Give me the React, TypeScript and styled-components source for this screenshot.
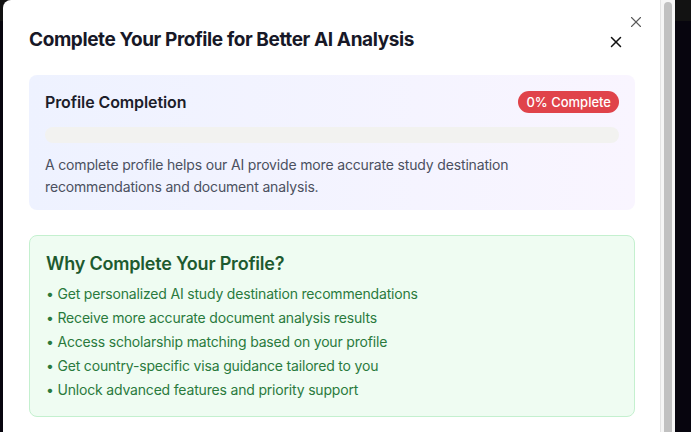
import React from 'react'
import styled, { createGlobalStyle } from 'styled-components'
import { X } from 'lucide-react'

const GlobalStyle = createGlobalStyle`
  html, body {
    margin: 0;
    height: 100%;
    overflow: hidden;
  }
  body {
    font-family: Inter, 'Noto Sans', sans-serif;
    background: linear-gradient(to bottom, #121212 0, #121212 21px, #07050e 21px);
  }
`

const benefits = [
  'Get personalized AI study destination recommendations',
  'Receive more accurate document analysis results',
  'Access scholarship matching based on your profile',
  'Get country-specific visa guidance tailored to you',
  'Unlock advanced features and priority support'
]

const App: React.FC = () => {
  const completion = 0
  return (
    <>
      <GlobalStyle />
      <Backdrop>
        <Dialog>
          <DialogBody>
            <DismissButton aria-label='Dismiss'>
              <X size={18} strokeWidth={1.5} />
            </DismissButton>
            <Header>
              <Title>Complete Your Profile for Better AI Analysis</Title>
              <CloseButton aria-label='Close'>
                <X size={18} strokeWidth={2} />
              </CloseButton>
            </Header>

            <ProgressCard>
              <CardRow>
                <CardTitle>Profile Completion</CardTitle>
                <Badge>{completion}% Complete</Badge>
              </CardRow>
              <Track>
                <Fill style={{ width: `${completion}%` }} />
              </Track>
              <Hint>
                A complete profile helps our AI provide more accurate study destination
                recommendations and document analysis.
              </Hint>
            </ProgressCard>

            <BenefitCard>
              <BenefitTitle>Why Complete Your Profile?</BenefitTitle>
              <BenefitList>
                {benefits.map((b) => (
                  <li key={b}>• {b}</li>
                ))}
              </BenefitList>
            </BenefitCard>
          </DialogBody>
          <ScrollTrack>
            <ScrollThumb />
          </ScrollTrack>
        </Dialog>
      </Backdrop>
    </>
  )
}

const Backdrop = styled.div`
  display: flex;
  align-items: flex-start;
  height: 100vh;
  padding-left: 3px;
  overflow: hidden;
`

const Dialog = styled.div`
  display: flex;
  width: 672px;
  height: 560px;
  flex-shrink: 0;
  background: #ffffff;
  border-radius: 8px 0 0 0;
  overflow: hidden;
`

const DialogBody = styled.div`
  position: relative;
  flex: 1;
  min-width: 0;
  padding: 26px 25px 0 26px;
`

const ScrollTrack = styled.div`
  display: flex;
  width: 15px;
  flex-shrink: 0;
  box-sizing: border-box;
  padding: 2px 3px 0 3px;
  background: #f6f6f6;
  border-left: 1px solid #e4e4e4;
`

const ScrollThumb = styled.div`
  flex: 1;
  height: 600px;
  border-radius: 5px;
  background: #c1c1c1;
`

const DismissButton = styled.button`
  position: absolute;
  top: 13px;
  right: 15px;
  display: flex;
  padding: 0;
  border: 0;
  background: none;
  color: #5a5a5a;
  cursor: pointer;
`

const Header = styled.div`
  display: flex;
  align-items: center;
  justify-content: space-between;
  padding-right: 10px;
  margin-bottom: 21px;
`

const Title = styled.h2`
  margin: 0;
  font-size: 19px;
  line-height: 28px;
  font-weight: 700;
  color: #171827;
  letter-spacing: -0.4px;
`

const CloseButton = styled.button`
  display: flex;
  padding: 0;
  margin-top: 3px;
  border: 0;
  background: none;
  color: #111;
  cursor: pointer;
`

const ProgressCard = styled.div`
  padding: 16px 16px 12px;
  border-radius: 8px;
  background: linear-gradient(to right, #eef2ff, #f9f5ff);
`

const CardRow = styled.div`
  display: flex;
  align-items: center;
  justify-content: space-between;
  height: 22px;
`

const CardTitle = styled.h3`
  margin: 0;
  font-size: 16px;
  line-height: 22px;
  font-weight: 600;
  color: #1c1d2a;
  letter-spacing: -0.1px;
`

const Badge = styled.span`
  padding: 2px 8px;
  border-radius: 999px;
  background: #e0434a;
  color: #ffffff;
  font-size: 13px;
  line-height: 18px;
  font-weight: 500;
`

const Track = styled.div`
  height: 16px;
  margin-top: 14px;
  border-radius: 999px;
  background: #f2f2f0;
  overflow: hidden;
`

const Fill = styled.div`
  height: 100%;
  background: #e0434a;
`

const Hint = styled.p`
  margin: 11px 0 0;
  font-size: 14px;
  line-height: 22px;
  color: #4b5060;
  letter-spacing: -0.16px;
`

const BenefitCard = styled.div`
  margin-top: 25px;
  padding: 16px;
  border: 1px solid #c4f0cf;
  border-radius: 8px;
  background: #effcf2;
`

const BenefitTitle = styled.h3`
  margin: 0 0 8px;
  font-size: 18px;
  line-height: 24px;
  font-weight: 600;
  color: #1d5a2f;
  letter-spacing: -0.2px;
`

const BenefitList = styled.ul`
  display: flex;
  flex-direction: column;
  gap: 4px;
  margin: 0;
  padding: 0;
  list-style: none;
  font-size: 14px;
  line-height: 20px;
  color: #2a7a3d;
  letter-spacing: -0.18px;
`

export default App
